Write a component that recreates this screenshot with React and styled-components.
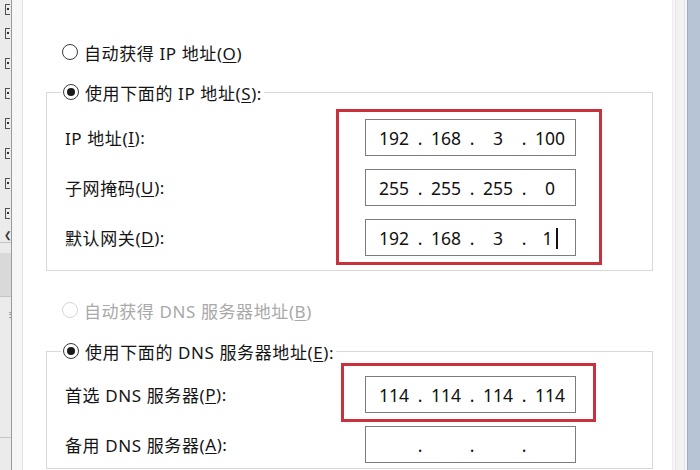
import React from 'react';
import styled, { createGlobalStyle } from 'styled-components';

const Global = createGlobalStyle`
  html, body { margin: 0; padding: 0; background: #fff; }
  body {
    width: 700px; height: 470px; overflow: hidden;
    font-family: "Noto Sans", "Noto Sans CJK SC", sans-serif;
    color: #141414;
  }
`;

const Screen = styled.div`
  display: flex;
  width: 700px;
  height: 470px;
  overflow: hidden;
  background: #fff;
`;

const SideList = styled.div`
  flex: none;
  width: 11px;
  background: #ebebeb;
  border-right: 1px solid #9a9a9a;
  display: flex;
  flex-direction: column;
`;

const SideItem = styled.div`
  flex: none;
  height: ${p => p.$h || 30}px;
  display: flex;
  align-items: center;
  padding-left: 5px;
`;

const Bracket = styled.span`
  position: relative;
  width: 4px;
  height: 9px;
  border: 1px solid #505050;
  border-right: none;
  &::after {
    content: "";
    position: absolute;
    left: 1px; top: 3px;
    width: 2px; height: 2px;
    background: #303030;
  }
`;

const Chevron = styled.div`
  height: 14px;
  padding-left: 4px;
  font-size: 9px;
  line-height: 14px;
  color: #333;
`;

const SideRule = styled.div`
  height: ${p => p.$h}px;
  background: ${p => p.$bg || 'transparent'};
  border-top: ${p => (p.$line ? '1px solid #c4c4c4' : 'none')};
`;

const Dots = styled.div`
  height: 18px;
  padding-left: 6px;
  font-size: 8px;
  line-height: 6px;
  color: #333;
`;

const Gutter = styled.div`
  flex: none;
  width: 10px;
  background: #f6f6f6;
  border-right: 1px solid #e3e3e3;
`;

const Dialog = styled.div`
  flex: 1;
  display: flex;
  flex-direction: column;
  padding: 40px 19px 0 23px;
  background: #fff;
`;

const RadioRow = styled.label`
  display: flex;
  align-items: center;
  height: 24px;
  gap: 6px;
  padding-left: ${p => (p.$inset ? 16 : 0)}px;
  margin-top: ${p => p.$top || 0}px;
  font-size: 17px;
  letter-spacing: 0.6px;
  color: ${p => (p.$disabled ? '#a8a8a8' : '#141414')};
  white-space: nowrap;
`;

const RadioDot = styled.span`
  flex: none;
  box-sizing: border-box;
  width: 16px;
  height: 16px;
  border-radius: 50%;
  border: 1px solid ${p => (p.$disabled ? '#d6d6d6' : '#3a3a3a')};
  background: #fff;
  display: flex;
  align-items: center;
  justify-content: center;
  &::after {
    content: "";
    width: 8px;
    height: 8px;
    border-radius: 50%;
    background: ${p => (p.$checked ? '#1a1a1a' : 'transparent')};
  }
`;

const Key = styled.span`
  text-decoration: underline;
  text-underline-offset: 2px;
  text-decoration-thickness: 1px;
`;

const Group = styled.fieldset`
  margin: ${p => p.$top}px 0 0 0;
  padding: ${p => p.$padTop}px 0 5px 0;
  border: 1px solid #d8d8d8;
  min-width: 0;
  flex: none;
`;

const Legend = styled.legend`
  margin-left: 14px;
  padding: 0 2px;
`;

const GroupBody = styled.div`
  display: flex;
  align-items: flex-start;
`;

const LabelCol = styled.div`
  flex: 1;
  display: flex;
  flex-direction: column;
  gap: 13px;
  padding: ${p => p.$top}px 0 0 18px;
`;

const FieldLabel = styled.div`
  height: 37px;
  display: flex;
  align-items: center;
  font-size: 17px;
  letter-spacing: 0.6px;
  white-space: nowrap;
`;

const FieldCol = styled.div`
  flex: none;
  width: 266px;
  margin-right: 50px;
  display: flex;
  flex-direction: column;
`;

const Highlight = styled.div`
  display: flex;
  flex-direction: column;
  gap: 13px;
  border: 3px solid #c9323c;
  padding: ${p => p.$pad};
  margin: ${p => p.$margin || '0'};
`;

const IpBox = styled.div`
  box-sizing: border-box;
  width: 211px;
  height: 37px;
  border: 1px solid #7c7c7c;
  background: #fff;
  display: flex;
  align-items: center;
  padding-left: 6px;
  margin-left: ${p => p.$left || 0}px;
  margin-top: ${p => p.$top || 0}px;
  font-family: "Noto Sans", sans-serif;
  font-size: 17.5px;
  color: #111;
`;

const Octet = styled.span`
  width: 44px;
  text-align: center;
`;

const Sep = styled.span`
  width: 8px;
  text-align: center;
`;

const Caret = styled.span`
  display: inline-block;
  width: 2px;
  height: 21px;
  margin-left: 3px;
  vertical-align: -4px;
  background: #111;
`;

const RightStrip = styled.div`
  flex: none;
  width: 15px;
  background: linear-gradient(90deg, #ececec 0 1px, #f7f7f7 1px 3px, #e6e6e6 3px 4px, #f2f2f2 4px 12px, #e4e4e4 12px 13px, #f4f4f4 13px);
`;

const Frame = styled.div`
  flex: none;
  width: 12px;
  background: #b7c4d6;
  border-left: 1px solid #9eacc0;
`;

function IpField({ parts, caret, left, top }) {
  return (
    <IpBox $left={left} $top={top}>
      {parts.map((p, i) => (
        <React.Fragment key={i}>
          {i > 0 && <Sep>.</Sep>}
          <Octet>
            {p}
            {caret && i === 3 && <Caret />}
          </Octet>
        </React.Fragment>
      ))}
    </IpBox>
  );
}

export default function App() {
  const side = Array.from({ length: 7 });
  return (
    <>
      <Global />
      <Screen>
        <SideList>
          <SideItem $h={18}><Bracket /></SideItem>
          {side.map((_, i) => (
            <SideItem key={i}><Bracket /></SideItem>
          ))}
          <Chevron>❮</Chevron>
          <SideRule $h={10} $line />
          <SideRule $h={43} $bg="#d9d9d9" />
          <SideRule $h={14} $line />
          <Dots>⋮</Dots>
          <SideRule $h={108} />
          <SideRule $h={20} $line />
        </SideList>
        <Gutter />
        <Dialog>
          <RadioRow $inset>
            <RadioDot />
            <span>自动获得 IP 地址(<Key>O</Key>)</span>
          </RadioRow>

          <Group $top={16} $padTop={5}>
            <Legend>
              <RadioRow>
                <RadioDot $checked />
                <span>使用下面的 IP 地址(<Key>S</Key>):</span>
              </RadioRow>
            </Legend>
            <GroupBody>
              <LabelCol $top={10}>
                <FieldLabel>IP 地址(<Key>I</Key>):</FieldLabel>
                <FieldLabel>子网掩码(<Key>U</Key>):</FieldLabel>
                <FieldLabel>默认网关(<Key>D</Key>):</FieldLabel>
              </LabelCol>
              <FieldCol>
                <Highlight $pad="7px 23px 6px 26px">
                  <IpField parts={['192', '168', '3', '100']} />
                  <IpField parts={['255', '255', '255', '0']} />
                  <IpField parts={['192', '168', '3', '1']} caret />
                </Highlight>
              </FieldCol>
            </GroupBody>
          </Group>

          <RadioRow $inset $disabled $top={27}>
            <RadioDot $disabled />
            <span>自动获得 DNS 服务器地址(<Key>B</Key>)</span>
          </RadioRow>

          <Group $top={17} $padTop={0}>
            <Legend>
              <RadioRow>
                <RadioDot $checked />
                <span>使用下面的 DNS 服务器地址(<Key>E</Key>):</span>
              </RadioRow>
            </Legend>
            <GroupBody>
              <LabelCol $top={13}>
                <FieldLabel>首选 DNS 服务器(<Key>P</Key>):</FieldLabel>
                <FieldLabel>备用 DNS 服务器(<Key>A</Key>):</FieldLabel>
              </LabelCol>
              <FieldCol>
                <Highlight $pad="10px 17px 6px 21px" $margin="0 6px 0 5px">
                  <IpField parts={['114', '114', '114', '114']} />
                </Highlight>
                <IpField parts={['', '', '', '']} left={29} top={4} />
              </FieldCol>
            </GroupBody>
          </Group>
        </Dialog>
        <RightStrip />
        <Frame />
      </Screen>
    </>
  );
}
